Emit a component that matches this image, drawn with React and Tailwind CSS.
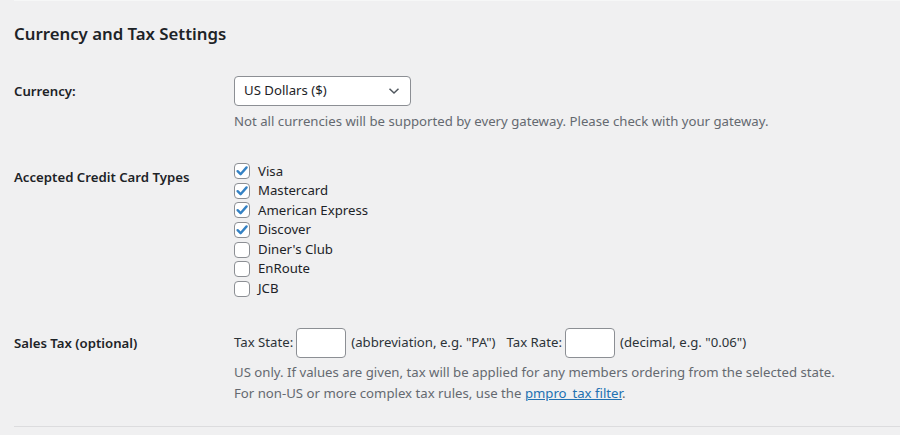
import React from 'react';

const cards = [
  { name: 'Visa', checked: true },
  { name: 'Mastercard', checked: true },
  { name: 'American Express', checked: true },
  { name: 'Discover', checked: true },
  { name: "Diner's Club", checked: false },
  { name: 'EnRoute', checked: false },
  { name: 'JCB', checked: false },
];

const Checkbox = ({ checked }) => (
  <span className="w-4 h-4 shrink-0 rounded-[4px] border border-[#8c8f94] bg-white flex items-center justify-center">
    {checked && (
      <svg width="14" height="14" viewBox="0 0 14 14">
        <path d="M2.6 7.2 L5.6 10.2 L11.6 3.4" fill="none" stroke="#3582c4" strokeWidth="2.4" strokeLinecap="round" strokeLinejoin="round" />
      </svg>
    )}
  </span>
);

const App = () => {
  return (
    <div className="w-[900px] h-[435px] bg-[#f0f0f1] text-[#1d2327] text-[13.2px] pl-[14px] overflow-hidden font-['Noto_Sans',sans-serif]">
      <div className="h-px bg-[#f6f7f7]" />

      {/* Heading */}
      <h2 className="pt-[20.5px] h-[43px] leading-[23px] text-[16.8px] font-semibold">Currency and Tax Settings</h2>

      {/* Currency */}
      <div className="flex mt-[32px]">
        <div className="w-[220px] shrink-0 leading-[30px] font-semibold">Currency:</div>
        <div>
          <div className="w-[177px] h-[30px] bg-white border border-[#8c8f94] rounded-[4px] flex items-center justify-between pl-[9px] pr-[10px]">
            <span>US Dollars ($)</span>
            <svg width="12" height="8" viewBox="0 0 12 8">
              <path d="M1.5 1.8 L6 6 L10.5 1.8" fill="none" stroke="#50575e" strokeWidth="1.5" />
            </svg>
          </div>
          <p className="mt-[5px] leading-[20px] text-[#646970]">Not all currencies will be supported by every gateway. Please check with your gateway.</p>
        </div>
      </div>

      {/* Card types */}
      <div className="flex mt-[30px]">
        <div className="w-[220px] shrink-0 pt-[5.5px] leading-[20px] font-semibold">Accepted Credit Card Types</div>
        <div className="flex flex-col pt-[0.5px]">
          {cards.map((c) => (
            <label key={c.name} className="flex items-center gap-[8px] h-[19.6px] leading-[19.6px]">
              <Checkbox checked={c.checked} />
              <span>{c.name}</span>
            </label>
          ))}
        </div>
      </div>

      {/* Sales tax */}
      <div className="flex mt-[29px]">
        <div className="w-[220px] shrink-0 leading-[30px] font-semibold">Sales Tax (optional)</div>
        <div>
          <div className="flex items-center h-[30px] text-[#2c3338]">
            <span>Tax State:</span>
            <span className="ml-[3px] w-[50px] h-[30px] bg-white border border-[#8c8f94] rounded-[4px]" />
            <span className="ml-[5px]">(abbreviation, e.g. "PA")</span>
            <span className="ml-[11px]">Tax Rate:</span>
            <span className="ml-[3px] w-[50px] h-[30px] bg-white border border-[#8c8f94] rounded-[4px]" />
            <span className="ml-[5px]">(decimal, e.g. "0.06")</span>
          </div>
          <div className="mt-[4.5px] leading-[21px] text-[#646970]">
            <p>US only. If values are given, tax will be applied for any members ordering from the selected state.</p>
            <p>For non-US or more complex tax rules, use the <a href="#" className="text-[#2271b1] underline">pmpro_tax filter</a>.</p>
          </div>
        </div>
      </div>

      <div className="mt-[21.5px] h-px bg-[#dcdcde]" />
    </div>
  );
};

export default App;
